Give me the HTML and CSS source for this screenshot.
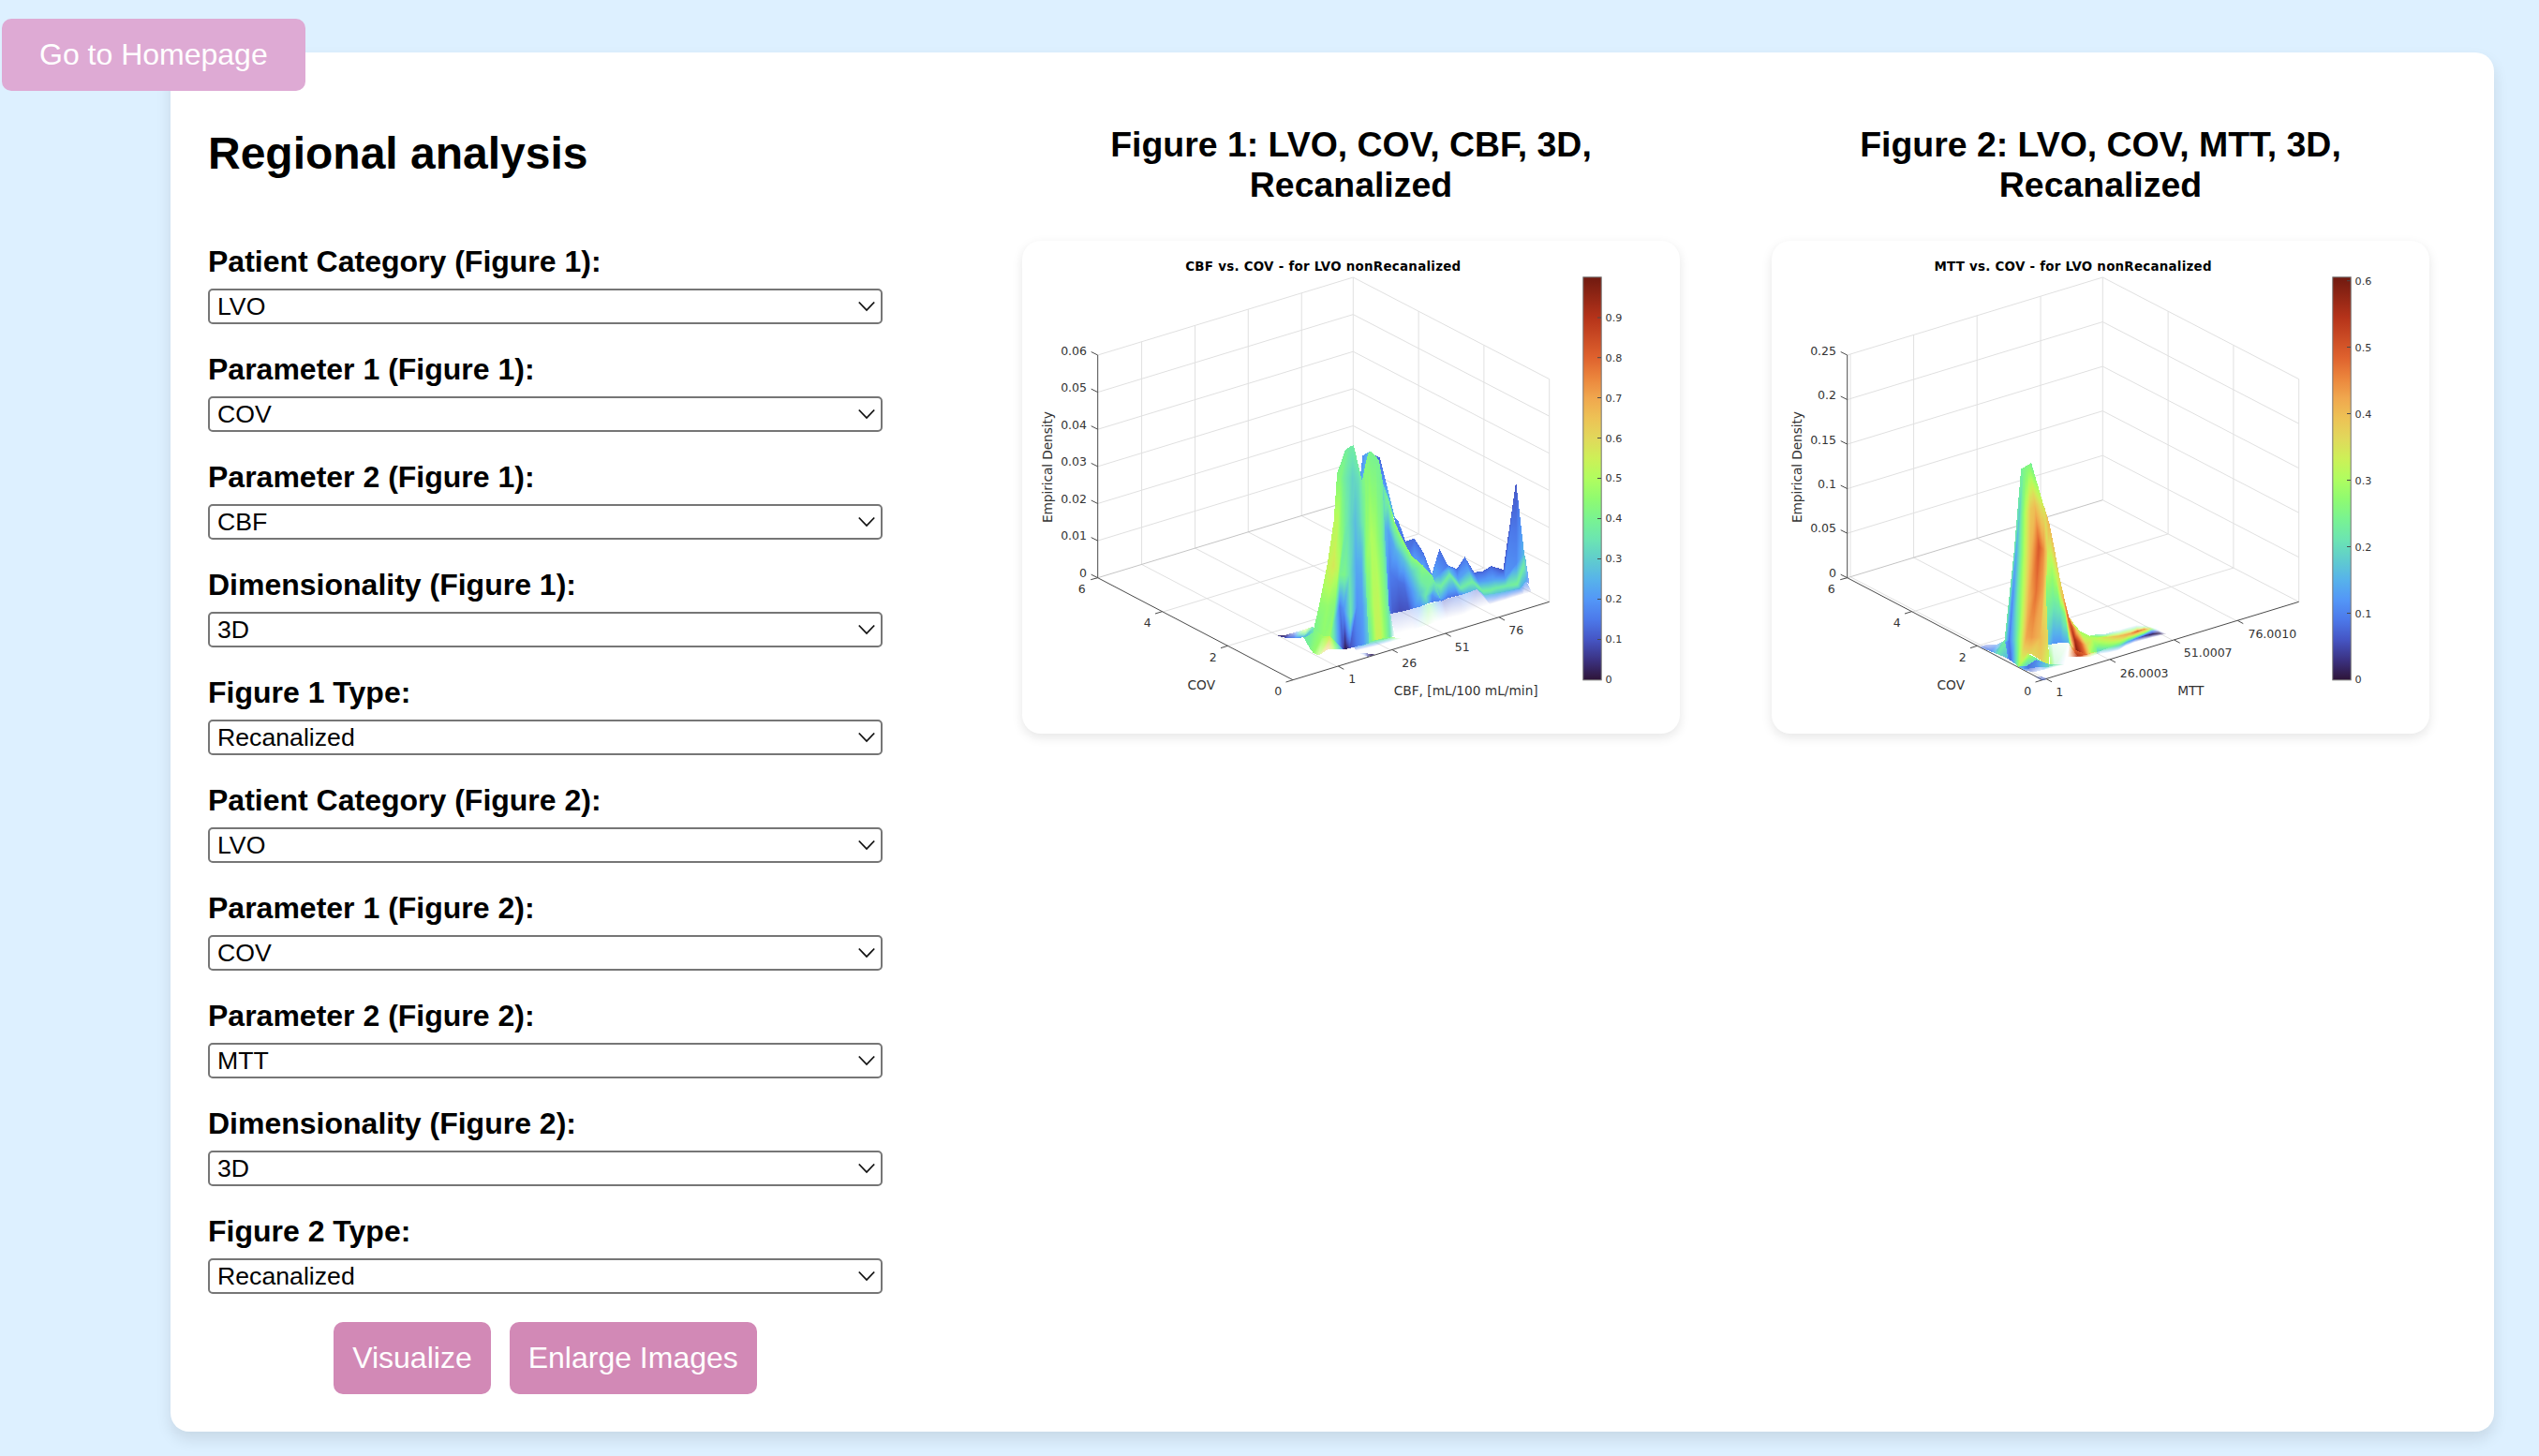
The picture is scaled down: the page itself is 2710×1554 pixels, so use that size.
FILE: index.html
```html
<!DOCTYPE html>
<html lang="en">
<head>
<meta charset="utf-8">
<title>Regional analysis</title>
<link rel="stylesheet" href="styles.css">
</head>
<body>
<a class="home-button">Go to Homepage</a>
<svg class="defs" width="0" height="0">
  <defs>
    <symbol id="chevron" viewBox="0 0 20 12"><path d="M1.8 1.5 10 10 18.2 1.5" fill="none" stroke="#111" stroke-width="1.8"/></symbol>
    <linearGradient id="turbo" x1="0" y1="1" x2="0" y2="0">
      <stop offset="0" stop-color="#2e1437"/><stop offset=".05" stop-color="#3b3282"/><stop offset=".1" stop-color="#4555c4"/><stop offset=".15" stop-color="#4c79ea"/><stop offset=".2" stop-color="#5397f7"/><stop offset=".25" stop-color="#57b3ea"/><stop offset=".3" stop-color="#60cdcd"/><stop offset=".35" stop-color="#6ce5b1"/><stop offset=".4" stop-color="#79f391"/><stop offset=".45" stop-color="#90fb70"/><stop offset=".5" stop-color="#b0fd5f"/><stop offset=".55" stop-color="#cdf057"/><stop offset=".6" stop-color="#e1d85b"/><stop offset=".65" stop-color="#edc255"/><stop offset=".7" stop-color="#f0a74e"/><stop offset=".75" stop-color="#eb853c"/><stop offset=".8" stop-color="#df622e"/><stop offset=".9" stop-color="#b5331a"/><stop offset="1" stop-color="#701a10"/>
    </linearGradient>
  </defs>
</svg>
<main class="panel">
  <section class="controls">
    <h2 class="title">Regional analysis</h2>
    <form class="fields">
      <label class="field">Patient Category (Figure 1):<span class="select-box"><select class="select"><option>LVO</option></select><svg class="chevron"><use href="#chevron"/></svg></span></label>
      <label class="field">Parameter 1 (Figure 1):<span class="select-box"><select class="select"><option>COV</option></select><svg class="chevron"><use href="#chevron"/></svg></span></label>
      <label class="field">Parameter 2 (Figure 1):<span class="select-box"><select class="select"><option>CBF</option></select><svg class="chevron"><use href="#chevron"/></svg></span></label>
      <label class="field">Dimensionality (Figure 1):<span class="select-box"><select class="select"><option>3D</option></select><svg class="chevron"><use href="#chevron"/></svg></span></label>
      <label class="field">Figure 1 Type:<span class="select-box"><select class="select"><option>Recanalized</option></select><svg class="chevron"><use href="#chevron"/></svg></span></label>
      <label class="field">Patient Category (Figure 2):<span class="select-box"><select class="select"><option>LVO</option></select><svg class="chevron"><use href="#chevron"/></svg></span></label>
      <label class="field">Parameter 1 (Figure 2):<span class="select-box"><select class="select"><option>COV</option></select><svg class="chevron"><use href="#chevron"/></svg></span></label>
      <label class="field">Parameter 2 (Figure 2):<span class="select-box"><select class="select"><option>MTT</option></select><svg class="chevron"><use href="#chevron"/></svg></span></label>
      <label class="field">Dimensionality (Figure 2):<span class="select-box"><select class="select"><option>3D</option></select><svg class="chevron"><use href="#chevron"/></svg></span></label>
      <label class="field">Figure 2 Type:<span class="select-box"><select class="select"><option>Recanalized</option></select><svg class="chevron"><use href="#chevron"/></svg></span></label>
    </form>
    <div class="actions">
      <button class="action">Visualize</button>
      <button class="action">Enlarge Images</button>
    </div>
  </section>
  <section class="figure">
    <h3 class="figure-title">Figure 1: LVO, COV, CBF, 3D, Recanalized</h3>
    <div class="card">
      <svg class="plot" viewBox="0 0 702 526">
        <g id="grid1" class="grid"></g>
        <g class="axis">
          <path d="M80.7 122V359.7L289 468.7L562.7 385.3"/>
          <path d="M80.7 122l-7-3.5M80.7 161.6l-7-3.5M80.7 201.2l-7-3.5M80.7 240.9l-7-3.5M80.7 280.5l-7-3.5M80.7 320.1l-7-3.5M80.7 359.7l-7-3.5M80.7 359.7l-7.5 2M149.5 395.7l-7.5 2.3M219.5 432.3l-7.5 2.3M289 468.7l-7.5 2.3M337.3 454l6 3.3M394.7 436.3l6 3.3M451.7 419l6 3.3M509 401.7l6 3.3"/>
        </g>
        <text class="plot-title" x="321.2" y="32" textLength="294">CBF vs. COV - for LVO nonRecanalized</text>
        <g class="tick end"><text x="69" y="121.5">0.06</text><text x="69" y="161">0.05</text><text x="69" y="200.5">0.04</text><text x="69" y="240.2">0.03</text><text x="69" y="279.5">0.02</text><text x="69" y="319">0.01</text><text x="69" y="358.5">0</text></g>
        <g class="tick mid"><text x="63.7" y="376">6</text><text x="133.7" y="412.3">4</text><text x="203.7" y="449">2</text><text x="273.3" y="485">0</text><text x="352.3" y="472.3">1</text><text x="413.3" y="455">26</text><text x="469.7" y="437.7">51</text><text x="527.3" y="420.3">76</text></g>
        <g class="axis-label"><text x="191.3" y="479">COV</text><text x="473.7" y="485" textLength="154">CBF, [mL/100 mL/min]</text><text transform="translate(32.3 241.6) rotate(-90)" textLength="119">Empirical Density</text></g>
        <rect class="bar" x="598.8" y="38.8" width="19.4" height="430"/>
        <path class="bar-ticks" d="M614 82h4M614 124.7h4M614 167.5h4M614 210.5h4M614 253.5h4M614 296.5h4M614 339.5h4M614 382.5h4M614 425.5h4"/>
        <g class="bar-label"><text x="622.6" y="85.7">0.9</text><text x="622.6" y="128.6">0.8</text><text x="622.6" y="171.5">0.7</text><text x="622.6" y="214.5">0.6</text><text x="622.6" y="257.4">0.5</text><text x="622.6" y="300.4">0.4</text><text x="622.6" y="343.3">0.3</text><text x="622.6" y="386.3">0.2</text><text x="622.6" y="429.3">0.1</text><text x="622.6" y="472">0</text></g>
      </svg>
      <canvas id="surface1" class="surface surface-cbf" width="870" height="750"></canvas>
    </div>
  </section>
  <section class="figure">
    <h3 class="figure-title">Figure 2: LVO, COV, MTT, 3D, Recanalized</h3>
    <div class="card">
      <svg class="plot" viewBox="0 0 702 526">
        <g id="grid2" class="grid"></g>
        <g class="axis">
          <path d="M80.7 122V359.7L289 468.7L562.7 385.3"/>
          <path d="M80.7 122l-7-3.5M80.7 169.5l-7-3.5M80.7 217.1l-7-3.5M80.7 264.6l-7-3.5M80.7 312.2l-7-3.5M80.7 359.7l-7-3.5M80.7 359.7l-7.5 2M149.5 395.7l-7.5 2.3M219.5 432.3l-7.5 2.3M289 468.7l-7.5 2.3M293 467.5l6 3.3M361 446.7l6 3.3M429.7 426l6 3.3M497.3 405.3l6 3.3"/>
        </g>
        <text class="plot-title" x="321.5" y="32" textLength="296">MTT vs. COV - for LVO nonRecanalized</text>
        <g class="tick end"><text x="69" y="121.5">0.25</text><text x="69" y="169">0.2</text><text x="69" y="216.5">0.15</text><text x="69" y="264">0.1</text><text x="69" y="311.3">0.05</text><text x="69" y="358.5">0</text></g>
        <g class="tick mid"><text x="63.7" y="376">6</text><text x="133.7" y="412.3">4</text><text x="203.7" y="449">2</text><text x="273.3" y="485">0</text><text x="307.3" y="486.3">1</text><text x="397.7" y="465.7">26.0003</text><text x="465.7" y="444.3">51.0007</text><text x="534.3" y="423.7">76.0010</text></g>
        <g class="axis-label"><text x="191.3" y="479">COV</text><text x="447.3" y="485">MTT</text><text transform="translate(32.3 241.6) rotate(-90)" textLength="119">Empirical Density</text></g>
        <rect class="bar" x="598.8" y="38.8" width="19.4" height="430"/>
        <path class="bar-ticks" d="M614 42.7h4M614 113.5h4M614 184.5h4M614 255.5h4M614 326.5h4M614 397.5h4"/>
        <g class="bar-label"><text x="622.6" y="47">0.6</text><text x="622.6" y="118">0.5</text><text x="622.6" y="189">0.4</text><text x="622.6" y="260">0.3</text><text x="622.6" y="331">0.2</text><text x="622.6" y="401.5">0.1</text><text x="622.6" y="472">0</text></g>
      </svg>
      <canvas id="surface2" class="surface surface-mtt" width="630" height="720"></canvas>
    </div>
  </section>
</main>
<script src="plots.js"></script>
</body>
</html>
```
FILE: styles.css
```css
body {
  margin: 0;
  min-height: 1554px;
  overflow: hidden;
  background: #ddf0ff;
  color: #000;
  font-family: Arial, "Liberation Sans", sans-serif;
  font-size: 32px;
}

.defs {
  position: absolute;
}

.home-button {
  position: absolute;
  left: 2px;
  top: 20px;
  padding: 20px 40px;
  border-radius: 10px;
  background: #deaad4;
  color: #fff;
  line-height: 37px;
}

.panel {
  display: grid;
  grid-template-columns: 720px 100px 800px 800px;
  box-sizing: border-box;
  width: 2480px;
  height: 1472px;
  margin: 56px 0 0 182px;
  padding: 40px 20px 40px 40px;
  border-radius: 20px;
  background: #fff;
  box-shadow: 0 8px 16px rgba(0, 0, 0, 0.1);
}

.controls {
  grid-column: 1 / 2;
}

.controls + .figure {
  grid-column: 3 / 4;
}

.title {
  margin: 40px 0 70px;
  font-size: 48px;
  line-height: 55px;
}

.fields {
  display: flex;
  flex-direction: column;
  gap: 30px;
}

.field {
  display: flex;
  flex-direction: column;
  gap: 10px;
  font-weight: bold;
  line-height: 37px;
}

.select-box {
  display: flex;
  position: relative;
}

.select {
  appearance: none;
  width: 100%;
  height: 38px;
  margin: 0;
  padding: 0 8px;
  border: 2px solid #767676;
  border-radius: 5px;
  background: #fff;
  color: #000;
  font-family: inherit;
  font-size: 26.67px;
  line-height: 30px;
}

.chevron {
  position: absolute;
  right: 7px;
  top: 13px;
  width: 20px;
  height: 12px;
}

.actions {
  display: flex;
  justify-content: center;
  gap: 20px;
  margin-top: 30px;
}

.action {
  padding: 20px;
  border: 0;
  border-radius: 10px;
  background: #d289b6;
  color: #fff;
  font-family: inherit;
  font-size: 32px;
  line-height: 37px;
}

.figure {
  display: flex;
  flex-direction: column;
  align-items: center;
}

.figure-title {
  width: 702px;
  box-sizing: border-box;
  padding: 0 80px;
  margin: 37px 0 38px;
  font-size: 37.44px;
  line-height: 43px;
  text-align: center;
}

.card {
  position: relative;
  width: 702px;
  height: 526px;
  border-radius: 20px;
  background: #fff;
  box-shadow: 0 4px 12px rgba(0, 0, 0, 0.1);
}

.plot {
  display: block;
  width: 702px;
  height: 526px;
  font-family: "DejaVu Sans", sans-serif;
  fill: #333;
}

.surface {
  position: absolute;
}

.surface-cbf {
  left: 269px;
  top: 203px;
  width: 290px;
  height: 250px;
}

.surface-mtt {
  left: 219px;
  top: 233px;
  width: 210px;
  height: 240px;
}

.grid {
  fill: none;
  stroke: #e0e0e0;
}

.grid .floor-edge {
  stroke: #c4c4c4;
}

.axis,
.bar-ticks {
  fill: none;
  stroke: #4a4a4a;
}

.plot-title {
  fill: #000;
  font-size: 13.4px;
  font-weight: bold;
  text-anchor: middle;
}

.tick {
  font-size: 12.5px;
}

.end {
  text-anchor: end;
}

.mid {
  text-anchor: middle;
}

.axis-label {
  font-size: 13.7px;
  text-anchor: middle;
}

.bar {
  fill: url(#turbo);
  stroke: #777;
}

.bar-label {
  font-size: 11.2px;
}
```
FILE: plots.js
```js
// Colour ramp in steps of 0.05
const ramp = ['2e1437','3b3282','4555c4','4c79ea','5397f7','57b3ea','60cdcd','6ce5b1','79f391','90fb70','b0fd5f','cdf057','e1d85b','edc255','f0a74e','eb853c','df622e','cb4b24','b5331a','93260f','701a10']
  .map(h => [0, 2, 4].map(i => parseInt(h.substr(i, 2), 16)));

function colour(v) {
  const t = Math.max(0, Math.min(19.999, v * 20)), i = Math.floor(t), f = t - i;
  return ramp[i].map((c, k) => c + (ramp[i + 1][k] - c) * f);
}

// Grid lines of the two walls and the floor
function grid(id, xs, divisions) {
  const L = [80.7, 359.7], B = [353.3, 276.7], R = [562.7, 385.3], F = [289, 468.7], H = 237.7;
  const at = (p, q, t) => [p[0] + (q[0] - p[0]) * t, p[1] + (q[1] - p[1]) * t];
  const seg = (p, q) => `M${p}L${q}`;
  const up = p => [p[0], p[1] - H];
  let d = '';
  for (let i = 1; i <= divisions; i++) {
    const h = H * i / divisions;
    d += `M${L[0]} ${L[1] - h}L${B[0]} ${B[1] - h}L${R[0]} ${R[1] - h}`;
  }
  xs.forEach(t => {
    const p = at(L, B, t);
    d += seg(p, up(p)) + seg(p, at(F, R, t));
  });
  [1 / 3, 2 / 3, 1].forEach(t => {
    const p = at(B, R, t);
    d += seg(p, up(p));
    if (t < 1) d += seg(p, at(L, F, t));
  });
  d += seg(B, up(B)) + seg(B, R);
  document.getElementById(id).innerHTML = `<path d="${d}"/><path class="floor-edge" d="${seg(L, B)}"/>`;
}

// Shaded surface: vertices are [x, y, value, alpha]
function surface(id, ox, oy, meshes) {
  const canvas = document.getElementById(id), w = canvas.width, h = canvas.height;
  const ctx = canvas.getContext('2d'), img = ctx.createImageData(w, h), px = img.data;
  function triangle(a, b, c) {
    const area = (b[0] - a[0]) * (c[1] - a[1]) - (c[0] - a[0]) * (b[1] - a[1]);
    if (Math.abs(area) < 0.01) return;
    const x0 = Math.max(0, Math.floor(Math.min(a[0], b[0], c[0]) - ox)), x1 = Math.min(w - 1, Math.ceil(Math.max(a[0], b[0], c[0]) - ox));
    const y0 = Math.max(0, Math.floor(Math.min(a[1], b[1], c[1]) - oy)), y1 = Math.min(h - 1, Math.ceil(Math.max(a[1], b[1], c[1]) - oy));
    const al = v => v[3] === undefined ? 1 : v[3];
    for (let y = y0; y <= y1; y++) for (let x = x0; x <= x1; x++) {
      const X = x + ox + 0.013, Y = y + oy + 0.017;
      const s = ((X - a[0]) * (c[1] - a[1]) - (c[0] - a[0]) * (Y - a[1])) / area;
      const t = ((b[0] - a[0]) * (Y - a[1]) - (X - a[0]) * (b[1] - a[1])) / area;
      if (s < 0 || t < 0 || s + t > 1) continue;
      const r = 1 - s - t, rgb = colour(a[2] * r + b[2] * s + c[2] * t);
      const A = al(a) * r + al(b) * s + al(c) * t, i = (y * w + x) * 4, D = px[i + 3] / 255, O = A + D * (1 - A);
      if (O <= 0) continue;
      for (let k = 0; k < 3; k++) px[i + k] = (rgb[k] * A + px[i + k] * D * (1 - A)) / O;
      px[i + 3] = O * 255;
    }
  }
  meshes.forEach(cols => {
    for (let i = 0; i + 1 < cols.length; i++) for (let j = 0; j + 1 < cols[i].length; j++) {
      const a = cols[i][j], b = cols[i + 1][j], c = cols[i][j + 1], d = cols[i + 1][j + 1];
      triangle(a, b, c);
      triangle(b, d, c);
    }
  });
  ctx.putImageData(img, 0, 0);
}

grid('grid1', [0.172, 0.381, 0.589, 0.798], 6);
grid('grid2', [0.012, 0.26, 0.508, 0.757], 5);

surface('surface1', 0, 0, [
  // distant low ridge
  [
    [[383,272,.18],[395,345,.15]],[[398,290,.17],[410,360,.15]],[[420,353,.14],[425,400,.15]],
    [[448,343,.13],[450,440,.25]],[[478,390,.14],[480,470,.3]],[[505,460,.16],[510,490,.3]]
  ],
  // right tail
  [
    [[503,462,.2],[506,475,.25],[510,490,.35],[533,545,.2]],
    [[529,376,.13],[531,455,.2],[533,497,.38],[555,535,.14]],
    [[556,430,.15],[558,445,.27],[562,460,.38],[588,527,.14]],
    [[584,441,.13],[588,475,.22],[597,502,.37],[612,520,.24]],
    [[610,402,.14],[622,445,.22],[635,482,.38],[648,507,.28]],
    [[640,452,.12],[652,480,.2],[668,512,.38],[672,525,.3]],
    [[668,448,.12],[680,480,.22],[690,510,.38],[695,522,.3]],
    [[694,432,.12],[702,475,.22],[712,502,.37],[720,518,.28]],
    [[733,443,.1],[738,470,.2],[742,496,.37],[750,512,.27]],
    [[774,161,.1],[775,425,.18],[777,490,.39],[787,505,.25]],
    [[800,390,.26],[800,415,.34],[799,435,.37],[806,480,.24]],
    [[804,405,.26],[808,430,.25,.9],[812,455,.2,.8],[817,490,.12,.5]]
  ],
  // pale skirt under the tail
  [
    [[368,585,.12,.25],[388,650,.12,0]],[[430,572,.12,.25],[445,635,.12,0]],
    [[470,561,.25,.35],[490,620,.45,.1]],[[495,553,.4,.4],[515,612,.4,0]],
    [[540,540,.1,.4],[555,600,.1,0]],[[588,527,.15,.4],[605,588,.1,0]],
    [[612,520,.2,.4],[630,575,.1,0]],[[648,507,.12,.4],[690,555,.1,0]],
    [[672,525,.28,.9],[690,555,.1,0]],[[720,518,.26,.9],[735,542,.1,0]],
    [[750,512,.25,.9],[765,532,.1,0]],[[787,505,.22,.8],[798,522,.1,0]],
    [[806,480,.22,.8],[824,513,.1,.1]]
  ],
  // slope between the peaks and the tail
  [
    [[340,130,.3],[348,300,.28],[355,450,.25],[366,585,.16]],
    [[362,200,.42],[366,320,.22],[370,450,.16],[380,583,.11]],
    [[385,290,.46],[388,380,.24],[395,480,.14],[402,579,.09]],
    [[410,345,.46],[413,410,.27],[416,490,.14],[430,572,.1]],
    [[440,400,.46],[440,450,.3],[440,510,.2],[448,567,.17]],
    [[475,430,.44],[470,475,.38],[465,520,.28],[470,561,.2]],
    [[505,462,.4],[492,500,.38],[484,530,.35],[490,553,.28]],
    [[512,478,.38],[510,505,.3],[505,525,.2],[505,548,.16]],
    [[533,538,.3],[534,540,.22],[535,541,.18],[537,542,.16]]
  ],
  // dark edges of the second peak
  [[[283,78,.18],[273,160,.2]],[[309,63,.3],[283,170,.3]]],
  [[[320,76,.13],[330,100,.15]],[[338,85,.12],[345,160,.2]],[[362,180,.2],[364,215,.3]],[[388,286,.25],[380,270,.3]]],
  // second peak
  [
    [[280,165,.4],[284,400,.35],[283,560,.26],[280,688,.2,.6]],
    [[292,105,.44],[297,400,.46],[300,560,.4],[308,675,.38]],
    [[300,72,.42],[310,330,.5],[320,560,.52],[328,670,.54]],
    [[308,63,.4],[322,350,.49],[334,560,.53],[341,669,.54]],
    [[326,80,.4],[338,350,.43],[347,560,.46],[355,666,.45]],
    [[335,95,.4],[345,350,.4],[359,560,.4],[370,662,.36]],
    [[346,155,.38],[355,350,.3],[367,560,.33,.9],[385,655,.3,0]]
  ],
  [[[255,690,.2,.8],[262,703,.1,0]],[[310,673,.38],[320,690,.15,0]],[[365,659,.45],[370,676,.2,0]],[[410,663,.5,0],[411,666,.5,0]]],
  // first peak
  [
    [[227,60,.38],[201,135,.42],[190,290,.52],[169,430,.53],[145,550,.45],[125,638,.4]],
    [[230,58,.38],[211,150,.43],[203,290,.52],[190,430,.57],[170,560,.46],[155,662,.45]],
    [[236,54,.38],[223,150,.38],[215,290,.44],[204,445,.52],[193,560,.43],[178,660,.47]],
    [[242,50,.37],[233,150,.35],[228,290,.38],[209,460,.4],[209,560,.16],[220,698,.08]],
    [[245,48,.37],[243,150,.33],[238,290,.34],[225,460,.41],[222,570,.19],[228,698,.01]],
    [[248,47,.37],[250,150,.31],[246,290,.31],[240,460,.35],[245,600,.35],[242,695,.09]],
    [[251,46,.37],[258,150,.32],[259,290,.27],[262,430,.23],[264,560,.19],[267,688,.16]],
    [[254,44,.38],[270,150,.34],[272,290,.31],[279,430,.24],[282,560,.21],[286,684,.2]],
    [[254,44,.38],[281,160,.39],[288,290,.39],[291,430,.37],[296,560,.3],[303,680,.3]]
  ],
  // feet of the surface
  [[[92,658,.36],[112,693,.4]],[[125,632,.4],[125,711,.45]],[[155,655,.47],[142,718,.5,.5]],[[178,658,.55],[170,700,.68,.35]],[[220,698,.2],[205,700,.7,0]]],
  [[[3,652,.05,.7],[15,657,.05]],[[30,654,.02,.9],[40,663,.12]],[[60,646,.1,.4],[65,663,.17]],[[100,634,.55,.3],[98,660,.24]],[[126,625,.35,.8],[125,645,.35]]],
  [[[270,711,.2,0],[285,718,.2,0]],[[295,711,.08,.5],[300,722,.06,.6]],[[312,714,.02,.9],[320,717,.02,.8]],[[328,716,.1,0],[327,717,.1,0]]]
]);

surface('surface2', 690, 30, [
  // right slope
  [
    [[890,150,.6],[905,330,.55],[910,450,.42],[915,624,.3]],
    [[905,180,.6],[915,340,.55],[918,460,.43],[922,624,.26]],
    [[921,233,.68],[929,360,.5],[935,480,.38],[935,620,.2]],
    [[936,305,.66],[942,410,.5],[955,510,.36],[960,618,.2]],
    [[955,410,.6],[962,465,.64],[972,530,.42],[983,616,.26]],
    [[970,475,.66],[976,510,.78],[983,555,.75],[995,640,.6,.8]],
    [[985,535,.66],[991,560,.85],[1002,605,.92],[1012,660,.99]],
    [[1000,557,.52],[1010,578,.62],[1022,620,.82],[1038,657,.78]],
    [[1020,580,.48],[1030,600,.53],[1042,625,.6],[1060,650,.45]],
    [[1055,597,.48],[1060,605,.52],[1068,625,.45],[1082,645,.35]],
    [[1105,597,.5],[1108,605,.55],[1110,618,.48],[1115,632,.35]]
  ],
  // pale floor patch
  [[[918,624,.4,.5],[925,692,.5,.9]],[[932,622,.4,.15],[940,690,.4,.3]],[[985,617,.4,.02],[970,688,.2,0]]],
  [[[985,617,.7,.1],[980,664,.7,0]],[[1003,640,.8,.9],[1010,664,.9,.8]],[[1040,655,.8,.8],[1045,664,.6,.2]],[[1080,643,.4,.7],[1085,652,.3,0]]],
  // low tail on the floor
  [
    [[1050,593,.42,.9],[1068,603,.53],[1078,618,.48],[1074,636,.37],[1075,655,.2,0]],
    [[1100,590,.3,.5],[1108,600,.6],[1115,615,.52],[1110,632,.4],[1110,650,.2,0]],
    [[1145,576,.25,0],[1145,596,.66],[1148,612,.52],[1145,626,.36],[1140,643,.2,0]],
    [[1175,567,.25,0],[1178,589,.7],[1175,602,.5],[1172,615,.25],[1162,630,.2,0]],
    [[1200,561,.2,0],[1205,580,.8],[1208,591,.5],[1200,604,.17],[1190,618,.15,0]],
    [[1225,562,.25,0],[1225,574,.72],[1230,583,.5],[1225,596,.07],[1225,608,.1,0]],
    [[1245,566,.4,0],[1243,572,.6,.7],[1250,580,.2,.8],[1252,590,.02],[1255,600,.1,0]],
    [[1270,575,.2,0],[1270,579,.1,.2],[1272,583,.05,.5],[1278,588,.02,.7],[1280,594,.1,0]],
    [[1297,589,.2,0],[1297,589,.1,0],[1297,589,.05,0],[1297,589,.02,0],[1297,590,.1,0]]
  ],
  // main peak
  [
    [[831,61,.38],[819,200,.36],[808,330,.37],[793,470,.38],[778,610,.38],[750,645,.36]],
    [[834,59,.4],[826,200,.3],[815,330,.23],[803,480,.18],[793,610,.15],[798,675,.13]],
    [[840,56,.42],[836,200,.42],[829,330,.38],[820,480,.37],[812,610,.32],[812,685,.3]],
    [[846,52,.42],[847,200,.53],[843,330,.52],[835,480,.5],[828,610,.5],[824,695,.48]],
    [[852,49,.42],[862,190,.64],[862,330,.67],[855,480,.68],[848,600,.7],[850,655,.6]],
    [[858,45,.42],[876,180,.66],[888,310,.82],[880,450,.78],[866,600,.72],[865,655,.6]],
    [[861,43,.4],[892,180,.59],[903,320,.74],[901,450,.7],[893,600,.67],[895,675,.62]],
    [[864,42,.38],[907,190,.57],[916,330,.6],[911,450,.56],[917,600,.6],[922,692,.5]]
  ],
  // base facets
  [[[850,650,.6],[824,696,.46]],[[858,655,.5],[845,702,.25]],[[880,667,.38],[882,696,.2]],[[922,690,.48],[922,696,.4]]],
  [[[824,694,.3],[838,704,.2,.7]],[[850,692,.13],[870,712,.12,.3]],[[880,672,.17],[895,706,.2,.2]],[[925,688,.33],[930,698,.3,0]],[[968,688,.4,0],[968,691,.4,0]]],
  [[[695,628,.13,0],[705,634,.15,.6]],[[725,623,.12,.3],[735,646,.18,.9]],[[755,622,.2,.5],[755,654,.35]],[[779,610,.38],[790,668,.25]]],
  [[[870,726,.12,0],[893,738,.12,.3]],[[900,727,.12,.6],[903,738,.12,.6]],[[915,730,.12,0],[912,737,.12,.2]]]
]);
```
